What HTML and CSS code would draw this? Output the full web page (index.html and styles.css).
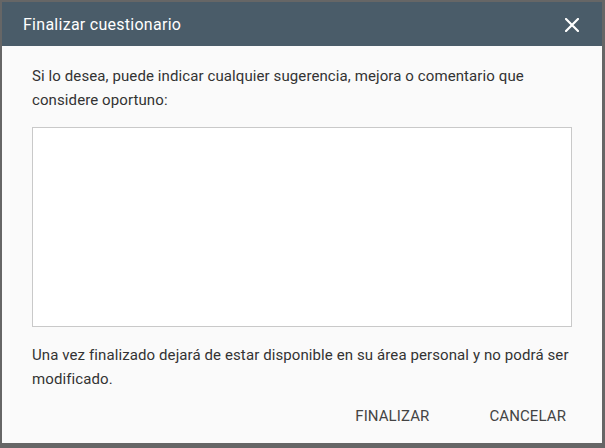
FILE: index.html
```html
<!DOCTYPE html>
<html lang="es">
<head>
<meta charset="utf-8">
<title>Finalizar cuestionario</title>
<link rel="stylesheet" href="styles.css">
</head>
<body>
<div class="backdrop">
  <div class="dialog">
    <div class="dialog-header">
      <span class="dialog-title">Finalizar cuestionario</span>
      <button class="close-btn" aria-label="Cerrar">
        <svg width="14" height="14" viewBox="0 0 14 14"><path d="M1 1 L13 13 M13 1 L1 13" stroke="#ffffff" stroke-width="2.2" stroke-linecap="square"/></svg>
      </button>
    </div>
    <div class="dialog-body">
      <p class="intro">Si lo desea, puede indicar cualquier sugerencia, mejora o comentario que considere oportuno:</p>
      <textarea class="comment"></textarea>
      <p class="note">Una vez finalizado dejará de estar disponible en su área personal y no podrá ser modificado.</p>
    </div>
    <div class="dialog-actions">
      <button class="action">FINALIZAR</button>
      <button class="action">CANCELAR</button>
    </div>
  </div>
</div>
</body>
</html>
```

FILE: styles.css
```css
* { box-sizing: border-box; }
html, body {
  margin: 0;
  padding: 0;
  width: 605px;
  height: 448px;
  overflow: hidden;
  font-family: Roboto, "Liberation Sans", sans-serif;
}
.backdrop {
  width: 605px;
  height: 448px;
  background: #666666;
  padding: 2px 3px 5px 2px;
}
.dialog {
  width: 600px;
  height: 441px;
  background: #fafafa;
  display: flex;
  flex-direction: column;
}
.dialog-header {
  height: 44px;
  background: #4a5c69;
  display: flex;
  align-items: center;
  justify-content: space-between;
  padding: 0 22px 0 21px;
}
.dialog-title {
  color: #ffffff;
  font-size: 16px;
  letter-spacing: 0.27px;
}
.close-btn {
  background: none;
  border: none;
  padding: 0;
  width: 16px;
  height: 16px;
  display: flex;
  align-items: center;
  justify-content: center;
  margin-top: 2px;
}
.dialog-body {
  padding: 18px 30px 0 30px;
  display: flex;
  flex-direction: column;
}
.intro, .note {
  margin: 0;
  font-size: 15px;
  letter-spacing: 0.1px;
  line-height: 24px;
  color: #333333;
}
.comment {
  display: block;
  margin: 15px 0 16px 0;
  width: 540px;
  height: 200px;
  border: 1px solid #c9c9c9;
  background: #ffffff;
  resize: none;
  font-family: inherit;
}
.dialog-actions {
  display: flex;
  justify-content: flex-end;
  gap: 28px;
  padding: 7px 20px 0 0;
}
.action {
  background: none;
  border: none;
  font-family: inherit;
  font-size: 15px;
  letter-spacing: 0.1px;
  color: #444444;
  height: 36px;
  padding: 0 16px;
}
```
